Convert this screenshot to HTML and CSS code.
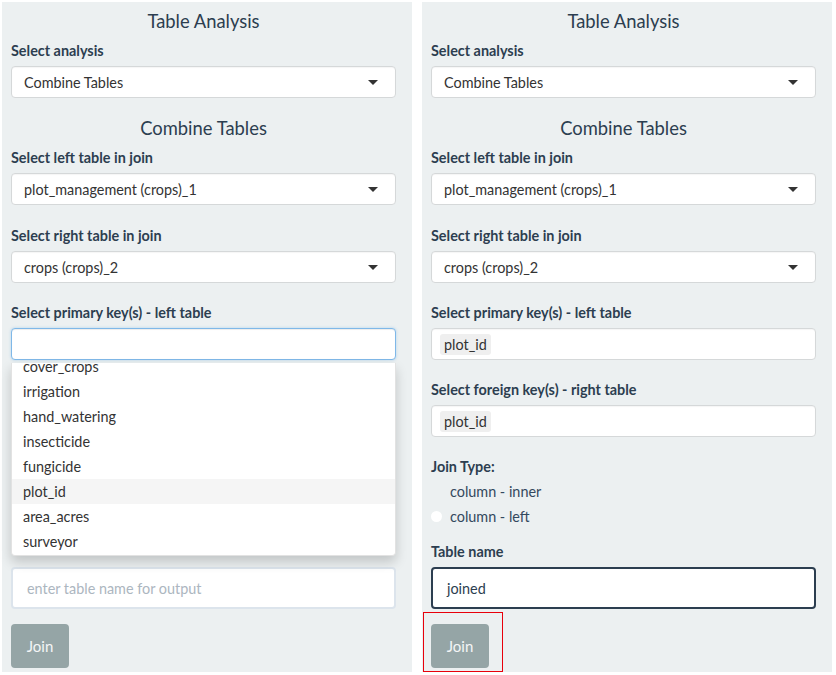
FILE: index.html
```html
<!DOCTYPE html>
<html lang="en">
<head>
<meta charset="utf-8">
<title>Table Analysis</title>
<link rel="stylesheet" href="styles.css">
</head>
<body>
<div class="page">
  <section class="panel">
    <h4 class="title">Table Analysis</h4>
    <div class="field top">
      <label class="lbl">Select analysis</label>
      <div class="select">Combine Tables<span class="caret"></span></div>
    </div>
    <h4 class="title sub">Combine Tables</h4>
    <div class="field first">
      <label class="lbl">Select left table in join</label>
      <div class="select">plot_management (crops)_1<span class="caret"></span></div>
    </div>
    <div class="field second">
      <label class="lbl">Select right table in join</label>
      <div class="select">crops (crops)_2<span class="caret"></span></div>
    </div>
    <div class="field">
      <label class="lbl">Select primary key(s) - left table</label>
      <div class="multi focus"></div>
    </div>
    <div class="field covered">
      <label class="lbl">Select foreign key(s) - right table</label>
      <div class="multi"></div>
    </div>
    <div class="field covered">
      <label class="lbl">Join Type:</label>
      <div class="radios">
        <div class="opt"><span class="dot hidden"></span>column - inner</div>
        <div class="opt"><span class="dot"></span>column - left</div>
      </div>
    </div>
    <div class="field name">
      <label class="lbl covered">Table name</label>
      <div class="textbox placeholder">enter table name for output</div>
    </div>
    <button class="btn">Join</button>

    <div class="dropdown">
      <ul class="options">
        <li>cover_crops</li>
        <li>irrigation</li>
        <li>hand_watering</li>
        <li>insecticide</li>
        <li>fungicide</li>
        <li class="active">plot_id</li>
        <li>area_acres</li>
        <li>surveyor</li>
      </ul>
    </div>
  </section>

  <section class="panel">
    <h4 class="title">Table Analysis</h4>
    <div class="field top">
      <label class="lbl">Select analysis</label>
      <div class="select">Combine Tables<span class="caret"></span></div>
    </div>
    <h4 class="title sub">Combine Tables</h4>
    <div class="field first">
      <label class="lbl">Select left table in join</label>
      <div class="select">plot_management (crops)_1<span class="caret"></span></div>
    </div>
    <div class="field second">
      <label class="lbl">Select right table in join</label>
      <div class="select">crops (crops)_2<span class="caret"></span></div>
    </div>
    <div class="field">
      <label class="lbl">Select primary key(s) - left table</label>
      <div class="multi"><span class="chip">plot_id</span></div>
    </div>
    <div class="field">
      <label class="lbl">Select foreign key(s) - right table</label>
      <div class="multi"><span class="chip">plot_id</span></div>
    </div>
    <div class="field">
      <label class="lbl">Join Type:</label>
      <div class="radios">
        <div class="opt"><span class="dot hidden"></span>column - inner</div>
        <div class="opt"><span class="dot"></span>column - left</div>
      </div>
    </div>
    <div class="field name">
      <label class="lbl">Table name</label>
      <div class="textbox focused">joined</div>
    </div>
    <button class="btn">Join</button>
    <div class="highlight"></div>
  </section>
</div>
</body>
</html>
```

FILE: styles.css
```css
* { box-sizing: border-box; }

html, body {
  margin: 0;
  padding: 0;
  background: #ffffff;
}

body {
  font-family: Lato, "Open Sans", "Liberation Sans", sans-serif;
  color: #2c3e50;
  font-size: 14.4px;
}

.page {
  display: flex;
  gap: 10px;
  padding: 2px 0 0 2px;
}

.panel {
  position: relative;
  width: 410px;
  height: 670px;
  background: #ecf0f1;
  padding: 8px 16px 0 9px;
}

.title {
  margin: 0;
  font-size: 18.4px;
  font-weight: 400;
  line-height: 22px;
  text-align: center;
  color: #2c3e50;
}

.title.sub {
  margin-top: 19px;
}

.field {
  margin-top: 20px;
}

.field.top {
  margin-top: 9px;
}

.field.first {
  margin-top: 9px;
}

.field.second {
  margin-top: 21px;
}

.field.name {
  margin-top: 13px;
}

.covered {
  visibility: hidden;
}

.lbl {
  display: block;
  font-weight: 700;
  font-size: 14.4px;
  line-height: 20px;
  margin-bottom: 5px;
  color: #2c3e50;
}

.select,
.multi {
  position: relative;
  height: 32px;
  background: #fff;
  border: 1px solid #d5d8d9;
  border-radius: 4px;
  box-shadow: inset 0 1px 1px rgba(0, 0, 0, 0.04);
  padding: 0 12px;
  display: flex;
  align-items: center;
  font-size: 14.4px;
  color: #333;
}

.multi {
  padding: 0 8px;
}

.multi.focus {
  border-color: #7fb8e8;
  box-shadow: inset 0 1px 1px rgba(0, 0, 0, 0.075), 0 0 3px rgba(102, 175, 233, 0.45);
}

.caret {
  position: absolute;
  right: 17px;
  top: 13px;
  width: 0;
  height: 0;
  border-left: 5px solid transparent;
  border-right: 5px solid transparent;
  border-top: 5px solid #333;
}

.chip {
  display: inline-block;
  background: #efefef;
  border-radius: 3px;
  padding: 0 4px;
  line-height: 21px;
  font-size: 14.4px;
  color: #333;
}

.radios {
  margin-top: -3px;
}

.opt {
  display: flex;
  align-items: center;
  height: 25px;
  font-size: 14.4px;
  color: #34495e;
}

.dot {
  width: 11px;
  height: 11px;
  border-radius: 50%;
  background: #fff;
  margin-right: 8px;
}

.dot.hidden {
  visibility: hidden;
}

.textbox {
  height: 42px;
  background: #fff;
  border: 2px solid #dce4ec;
  border-radius: 4px;
  padding: 0 14px;
  display: flex;
  align-items: center;
  font-size: 14.4px;
  color: #2c3e50;
}

.textbox.placeholder {
  color: #acb6c0;
}

.textbox.focused {
  border-color: #2c3e50;
}

.btn {
  display: block;
  margin-top: 15px;
  height: 44px;
  width: 58px;
  padding: 0;
  border: none;
  border-radius: 4px;
  background: #95a5a6;
  color: #f4f6f6;
  font-family: inherit;
  font-size: 15px;
}

.dropdown {
  position: absolute;
  left: 9px;
  top: 361px;
  width: 385px;
  height: 193px;
  background: #fff;
  border: 1px solid #e2e2e2;
  border-top: none;
  border-radius: 0 0 4px 4px;
  box-shadow: 0 6px 12px rgba(0, 0, 0, 0.18);
  overflow: hidden;
}

.options {
  list-style: none;
  margin: -9px 0 0 0;
  padding: 0;
}

.options li {
  height: 25px;
  line-height: 25px;
  padding-left: 11px;
  font-size: 14.4px;
  color: #333;
}

.options li.active {
  background: #f5f5f5;
}

.highlight {
  position: absolute;
  left: 1px;
  top: 610px;
  width: 80px;
  height: 60px;
  border: 1px solid #e8000b;
}
```
